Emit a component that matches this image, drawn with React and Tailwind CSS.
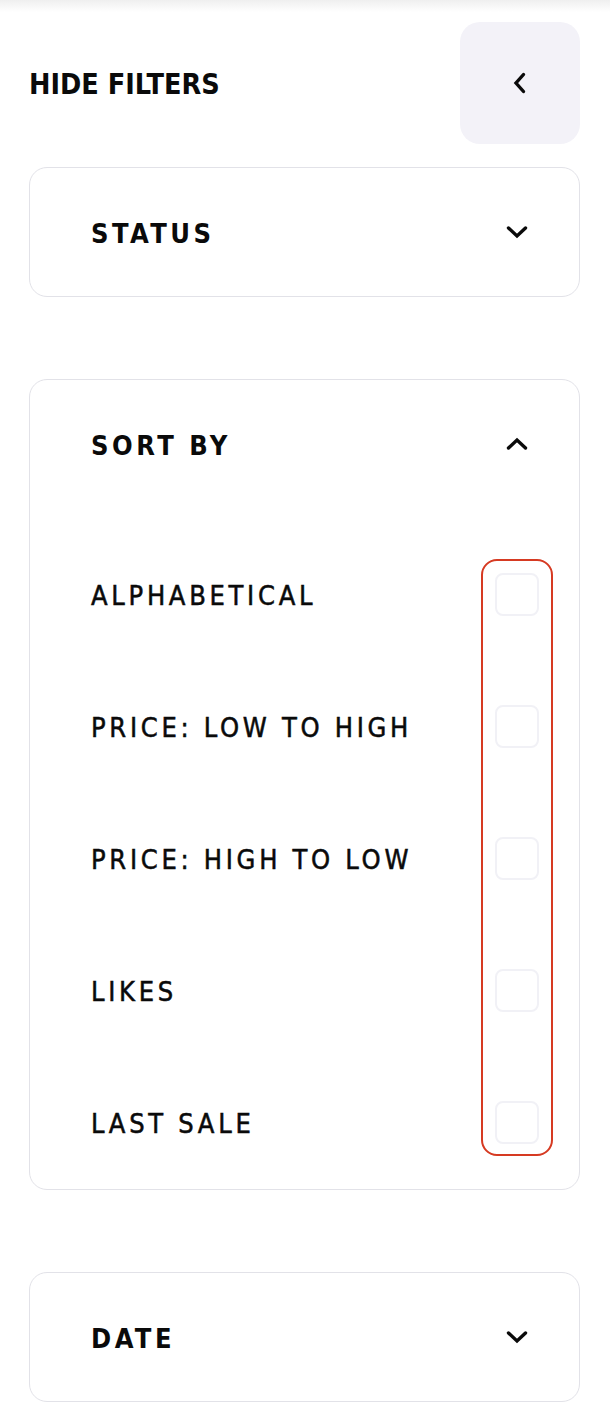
import React from "react";

const font = { fontFamily: '"DejaVu Sans Condensed", "Liberation Sans Narrow", "DejaVu Sans", sans-serif' };

function Chevron({ dir = "down" }) {
  if (dir === "left") {
    return (
      <svg width="16" height="24" viewBox="0 0 16 24" fill="none">
        <polyline points="11.5,3.5 4,12 11.5,20.5" stroke="#0a0a0a" strokeWidth="3.4" strokeLinecap="round" strokeLinejoin="miter" />
      </svg>
    );
  }
  const pts = dir === "up" ? "2.5,11 11,3 19.5,11" : "2.5,3 11,11 19.5,3";
  return (
    <svg width="22" height="14" viewBox="0 0 22 14" fill="none">
      <polyline points={pts} stroke="#0a0a0a" strokeWidth="3.4" strokeLinecap="round" strokeLinejoin="miter" />
    </svg>
  );
}

function CardHeader({ title, dir }) {
  return (
    <div className="h-[128px] flex items-center justify-between pl-[61px] pr-[51px]">
      <span className="text-[27px] font-bold tracking-[3.5px] text-[#0a0a0a] leading-none mt-[3px]">{title}</span>
      <Chevron dir={dir} />
    </div>
  );
}

const items = ["ALPHABETICAL", "PRICE: LOW TO HIGH", "PRICE: HIGH TO LOW", "LIKES", "LAST SALE"];

export default function App() {
  return (
    <div className="w-[610px] min-h-[1428px] bg-white" style={font}>
      <div className="h-[12px] bg-gradient-to-b from-[#efefef] to-white" />
      <div className="px-[29px] pt-[10px] pr-[30px]">
        <div className="flex items-center justify-between">
          <span className="text-[28.5px] font-bold tracking-[0px] text-[#0a0a0a] leading-none mt-[4px]">HIDE FILTERS</span>
          <button className="w-[120px] h-[122px] rounded-[20px] bg-[#f3f2f8] flex items-center justify-center">
            <Chevron dir="left" />
          </button>
        </div>

        <div className="mt-[23px] border border-[#e2e2e8] rounded-[18px]">
          <CardHeader title="STATUS" dir="down" />
        </div>

        <div className="mt-[82px] border border-[#e2e2e8] rounded-[18px] pb-[33px]">
          <CardHeader title="SORT BY" dir="up" />
          <div className="mt-[51px] flex justify-between pl-[61px] pr-[26px]">
            <div className="flex flex-col gap-[89px] pt-[15px]">
              {items.map((t) => (
                <div key={t} className="h-[43px] flex items-center text-[27px] tracking-[3.7px] text-[#0a0a0a] leading-none [-webkit-text-stroke:0.5px_#0a0a0a]">
                  {t}
                </div>
              ))}
            </div>
            <div className="border-2 border-[#d63a22] rounded-[16px] pt-[12px] pb-[10px] px-[12px] flex flex-col gap-[89px]">
              {items.map((t) => (
                <div key={t} className="w-[44px] h-[43px] rounded-[8px] border-2 border-[#f1f1f6] bg-white" />
              ))}
            </div>
          </div>
        </div>

        <div className="mt-[82px] border border-[#e2e2e8] rounded-[18px]">
          <CardHeader title="DATE" dir="down" />
        </div>
      </div>
    </div>
  );
}
